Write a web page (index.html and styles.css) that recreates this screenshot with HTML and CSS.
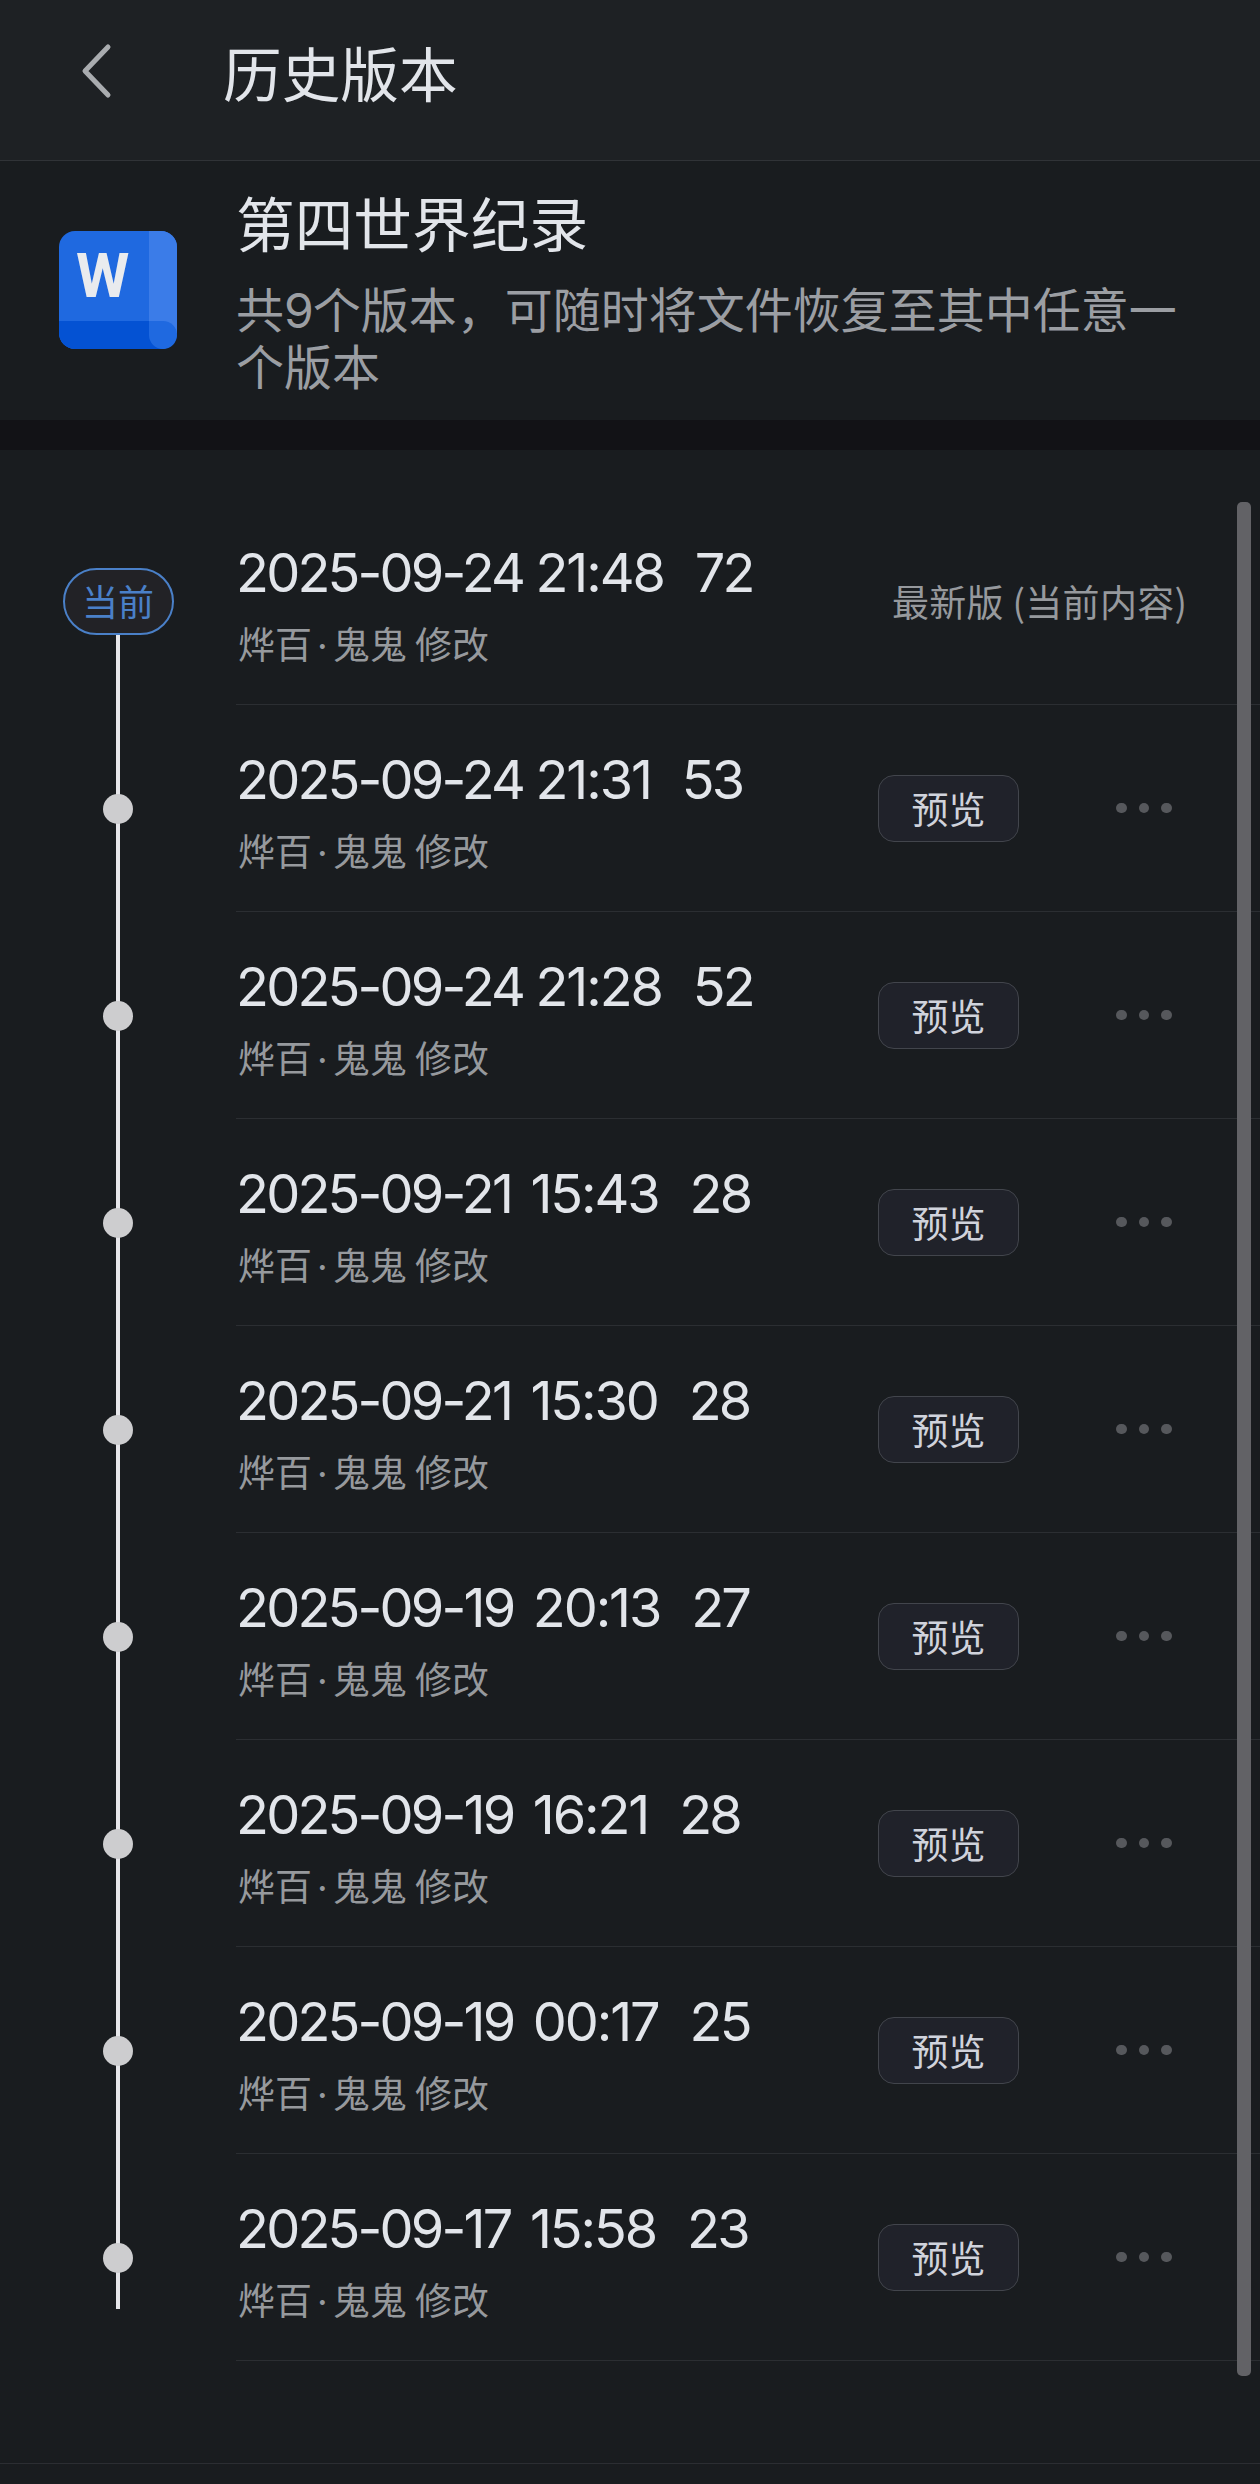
FILE: index.html
```html
<!DOCTYPE html>
<html lang="zh-CN">

<head>
    <title>历史版本</title>
    <meta charset="UTF-8">
    <meta name="viewport" content="width=device-width, initial-scale=1.0">
    <link rel="stylesheet" href="styles.css">
</head>

<body>
    <header class="topbar">
        <svg class="back" viewBox="0 0 32 56" fill="none">
            <path d="M27 4 L4 28 L27 52" />
        </svg>
        <h1>历史版本</h1>
    </header>

    <section class="doc">
        <svg class="doc-icon" viewBox="0 0 118 118">
            <rect width="118" height="118" rx="16" fill="#1f69e0" />
            <path d="M90 0H102A16 16 0 0 1 118 16V102H90Z" fill="#3b7ce8" />
            <path d="M0 90H104V118H16A16 16 0 0 1 0 102Z" fill="#0452d3" />
            <path d="M90 90H104A14 14 0 0 1 118 104A14 14 0 0 1 104 118A14 14 0 0 1 90 104Z" fill="#1f69e0" />
            <text x="17" y="66">W</text>
        </svg>
        <div class="doc-info">
            <h2>第四世界纪录</h2>
            <p>共<span class="num">9</span>个版本，可随时将文件恢复至其中任意一个版本</p>
        </div>
    </section>

    <main class="versions">
        <div class="row current">
            <div class="rail"><span class="tag">当前</span></div>
            <div class="item">
                <div class="info">
                    <div class="time">2025-09-24 <span>21:48</span><b>72</b></div>
                    <div class="author">烨百<i>·</i>鬼鬼 修改</div>
                </div>
                <div class="latest">最新版 (当前内容)</div>
            </div>
        </div>
        <div class="row">
            <div class="rail"><span class="dot"></span></div>
            <div class="item">
                <div class="info">
                    <div class="time">2025-09-24 <span>21:31</span><b>53</b></div>
                    <div class="author">烨百<i>·</i>鬼鬼 修改</div>
                </div>
                <button class="preview">预览</button>
                <div class="more"><span></span><span></span><span></span></div>
            </div>
        </div>
        <div class="row">
            <div class="rail"><span class="dot"></span></div>
            <div class="item">
                <div class="info">
                    <div class="time">2025-09-24 <span>21:28</span><b>52</b></div>
                    <div class="author">烨百<i>·</i>鬼鬼 修改</div>
                </div>
                <button class="preview">预览</button>
                <div class="more"><span></span><span></span><span></span></div>
            </div>
        </div>
        <div class="row">
            <div class="rail"><span class="dot"></span></div>
            <div class="item">
                <div class="info">
                    <div class="time loose">2025-09-21 <span>15:43</span><b>28</b></div>
                    <div class="author">烨百<i>·</i>鬼鬼 修改</div>
                </div>
                <button class="preview">预览</button>
                <div class="more"><span></span><span></span><span></span></div>
            </div>
        </div>
        <div class="row">
            <div class="rail"><span class="dot"></span></div>
            <div class="item">
                <div class="info">
                    <div class="time loose">2025-09-21 <span>15:30</span><b>28</b></div>
                    <div class="author">烨百<i>·</i>鬼鬼 修改</div>
                </div>
                <button class="preview">预览</button>
                <div class="more"><span></span><span></span><span></span></div>
            </div>
        </div>
        <div class="row">
            <div class="rail"><span class="dot"></span></div>
            <div class="item">
                <div class="info">
                    <div class="time loose">2025-09-19 <span>20:13</span><b>27</b></div>
                    <div class="author">烨百<i>·</i>鬼鬼 修改</div>
                </div>
                <button class="preview">预览</button>
                <div class="more"><span></span><span></span><span></span></div>
            </div>
        </div>
        <div class="row">
            <div class="rail"><span class="dot"></span></div>
            <div class="item">
                <div class="info">
                    <div class="time loose">2025-09-19 <span>16:21</span><b>28</b></div>
                    <div class="author">烨百<i>·</i>鬼鬼 修改</div>
                </div>
                <button class="preview">预览</button>
                <div class="more"><span></span><span></span><span></span></div>
            </div>
        </div>
        <div class="row">
            <div class="rail"><span class="dot"></span></div>
            <div class="item">
                <div class="info">
                    <div class="time loose">2025-09-19 <span>00:17</span><b>25</b></div>
                    <div class="author">烨百<i>·</i>鬼鬼 修改</div>
                </div>
                <button class="preview">预览</button>
                <div class="more"><span></span><span></span><span></span></div>
            </div>
        </div>
        <div class="row last">
            <div class="rail"><span class="dot"></span></div>
            <div class="item">
                <div class="info">
                    <div class="time loose">2025-09-17 <span>15:58</span><b>23</b></div>
                    <div class="author">烨百<i>·</i>鬼鬼 修改</div>
                </div>
                <button class="preview">预览</button>
                <div class="more"><span></span><span></span><span></span></div>
            </div>
        </div>
        <div class="scrollbar"></div>
    </main>

    <footer class="bottom"></footer>
</body>

</html>
```

FILE: styles.css
```css
* {
    box-sizing: border-box;
    margin: 0;
    padding: 0;
}

body {
    width: 1260px;
    height: 2484px;
    display: flex;
    flex-direction: column;
    overflow: hidden;
    background: #191c1f;
    color: #e2e5ea;
    font-family: "Noto Sans CJK SC", sans-serif;
}

h1,
h2 {
    font-size: 58.7px;
    font-weight: 400;
    line-height: 72px;
}

.topbar {
    display: flex;
    align-items: flex-start;
    height: 161px;
    padding-left: 81px;
    background: #1e2124;
    border-bottom: 1px solid #303337;
}

.topbar h1 {
    margin: 36px 0 0 110px;
}

.back {
    width: 32px;
    height: 56px;
    margin-top: 43px;
}

.back path {
    stroke: #a9acaf;
    stroke-width: 5;
    stroke-linecap: round;
    stroke-linejoin: round;
}

/* document summary */
.doc {
    display: flex;
    align-items: flex-start;
    height: 259px;
    padding-left: 59px;
}

.doc-icon {
    width: 118px;
    height: 118px;
    margin-top: 70px;
}

.doc-icon text {
    font: bold 61px Roboto, sans-serif;
    fill: #e9ebee;
}

.doc-info {
    width: 950px;
    margin: 25px 0 0 59px;
}

.doc-info p {
    margin-top: 21px;
    font-size: 48px;
    line-height: 57px;
    color: #9b9ea3;
}

.num {
    font-family: Inter, sans-serif;
    letter-spacing: -1px;
    line-height: 0;
}

/* version list */
.versions {
    position: relative;
    border-top: 30px solid #121216;
    padding-top: 48px;
}

.row {
    display: flex;
    height: 207px;
}

.rail {
    position: relative;
    width: 236px;
    display: flex;
    align-items: center;
    justify-content: center;
}

.rail::before {
    content: "";
    position: absolute;
    left: 116px;
    top: 0;
    bottom: 0;
    width: 4px;
    background: #e6e6ea;
}

.current .rail::before {
    top: 50%;
}

.last .rail::before {
    bottom: 52px;
}

.dot {
    position: relative;
    width: 30px;
    height: 30px;
    border-radius: 50%;
    background: #cdcdcf;
}

.tag {
    position: relative;
    width: 111px;
    height: 67px;
    border: 2px solid #4a80c8;
    border-radius: 34px;
    background: #222226;
    color: #4a80c8;
    font-size: 36px;
    line-height: 61px;
    text-align: center;
}

.item {
    flex: 1;
    display: flex;
    align-items: center;
    border-bottom: 1px solid #2b2e32;
}

.info {
    width: 642px;
    height: 100%;
    padding-top: 42px;
}

.time {
    font-family: Inter, sans-serif;
    font-size: 54px;
    line-height: 66px;
    letter-spacing: -2.8px;
    white-space: nowrap;
}

.time.loose {
    word-spacing: 7px;
}

.time span {
    letter-spacing: -2.1px;
}

.time b {
    margin-left: 31px;
    font-weight: 400;
}

.author {
    margin-top: 12px;
    padding-left: 2px;
    font-size: 37px;
    line-height: 50px;
    color: #96999d;
}

.author i {
    margin: 0 5px;
    font-family: Inter, sans-serif;
    font-style: normal;
    line-height: 0;
}

.latest {
    margin-left: 14px;
    font-size: 37px;
    color: #96999d;
    letter-spacing: 0.3px;
    white-space: nowrap;
}

.preview {
    width: 141px;
    height: 67px;
    border: 1px solid #42454c;
    border-radius: 16px;
    background: #20222a;
    color: #d0d3dc;
    font-family: inherit;
    font-size: 37px;
    line-height: 61px;
}

.more {
    display: flex;
    gap: 12px;
    margin-left: 97px;
}

.more span {
    width: 10.5px;
    height: 10.5px;
    border-radius: 50%;
    background: #56585c;
}

.scrollbar {
    position: absolute;
    top: 52px;
    right: 9px;
    width: 14px;
    height: 1874px;
    border-radius: 5px;
    background: #626266;
}

.bottom {
    margin-top: 102px;
    border-top: 1px solid #2b2e32;
}
```
